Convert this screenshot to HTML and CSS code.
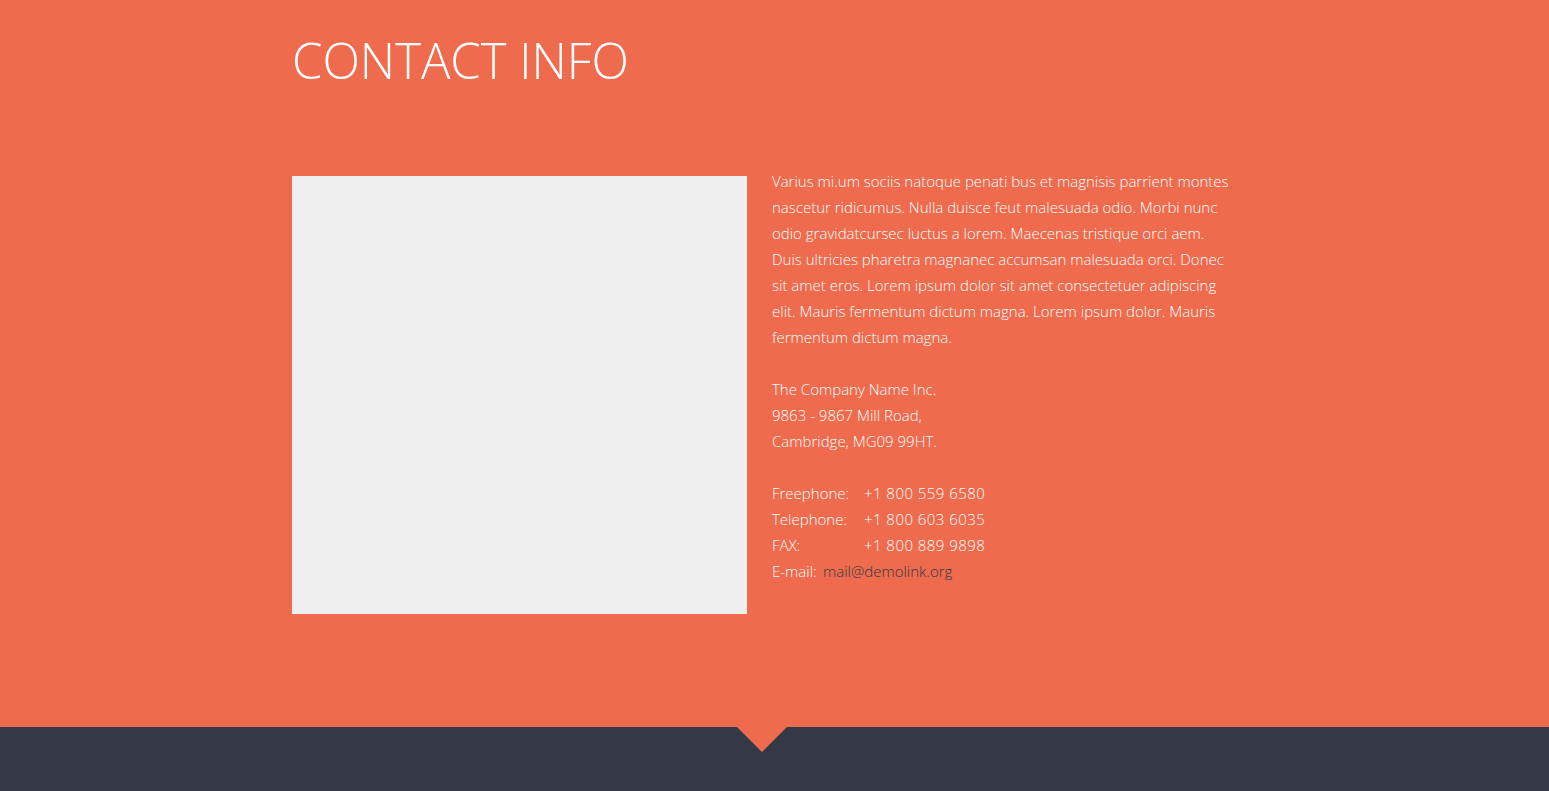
FILE: index.html
```html
<!DOCTYPE html>
<html>
<head>
<meta charset="utf-8">
<link rel="stylesheet" href="styles.css">
</head>
<body>
<section class="contact">
  <div class="container">
    <h2 class="title">CONTACT INFO</h2>
    <div class="row">
      <div class="map"></div>
      <div class="info">
        <p class="lead">Varius mi.um sociis natoque penati bus et magnisis parrient montes nascetur ridicumus. Nulla duisce feut malesuada odio. Morbi nunc odio gravidatcursec luctus a lorem. Maecenas tristique orci aem. Duis ultricies pharetra magnanec accumsan malesuada orci. Donec sit amet eros. Lorem ipsum dolor sit amet consectetuer adipiscing elit. Mauris fermentum dictum magna. Lorem ipsum dolor. Mauris fermentum dictum magna.</p>
        <p class="address">The Company Name Inc.<br>9863 - 9867 Mill Road,<br>Cambridge, MG09 99HT.</p>
        <dl class="phones">
          <div class="line"><dt>Freephone:</dt><dd>+1 800 559 6580</dd></div>
          <div class="line"><dt>Telephone:</dt><dd>+1 800 603 6035</dd></div>
          <div class="line"><dt>FAX:</dt><dd>+1 800 889 9898</dd></div>
          <div class="line"><dt class="short">E-mail:</dt><dd><a class="mail" href="#">mail@demolink.org</a></dd></div>
        </dl>
      </div>
    </div>
  </div>
</section>
<footer class="footer">
  <span class="notch"></span>
</footer>
</body>
</html>
```
FILE: styles.css
```css
html, body {
  margin: 0;
  padding: 0;
}
body {
  font-family: "Open Sans", "Liberation Sans", sans-serif;
  font-weight: 300;
  background: #333a46;
  color: #fff;
}
.contact {
  background: #ee6b4d;
  height: 727px;
  box-sizing: border-box;
  padding-top: 29px;
}
.container {
  width: 965px;
  margin: 0 auto;
}
.title {
  margin: 0;
  font-size: 49px;
  font-weight: 300;
  line-height: 62px;
  letter-spacing: 0;
}
.row {
  display: flex;
  gap: 25px;
  margin-top: 85px;
}
.map {
  width: 455px;
  height: 438px;
  background: #efefef;
  flex: none;
}
.info {
  width: 462px;
  flex: none;
  margin-top: -8px;
  font-size: 15px;
  line-height: 26px;
}
.info p {
  margin: 0 0 26px;
}
.phones {
  margin: 0;
}
.line {
  display: flex;
  align-items: baseline;
}
.phones dt {
  width: 92px;
}
.phones dt.short {
  width: 51px;
}
.phones dd {
  margin: 0;
  letter-spacing: 0.45px;
}
.mail {
  color: #333a46;
  text-decoration: none;
  letter-spacing: 0;
}
.footer {
  position: relative;
  height: 64px;
  background: #333a46;
}
.notch {
  position: absolute;
  left: 737px;
  top: 0;
  width: 0;
  height: 0;
  border-left: 25px solid transparent;
  border-right: 25px solid transparent;
  border-top: 25px solid #ee6b4d;
}
```
